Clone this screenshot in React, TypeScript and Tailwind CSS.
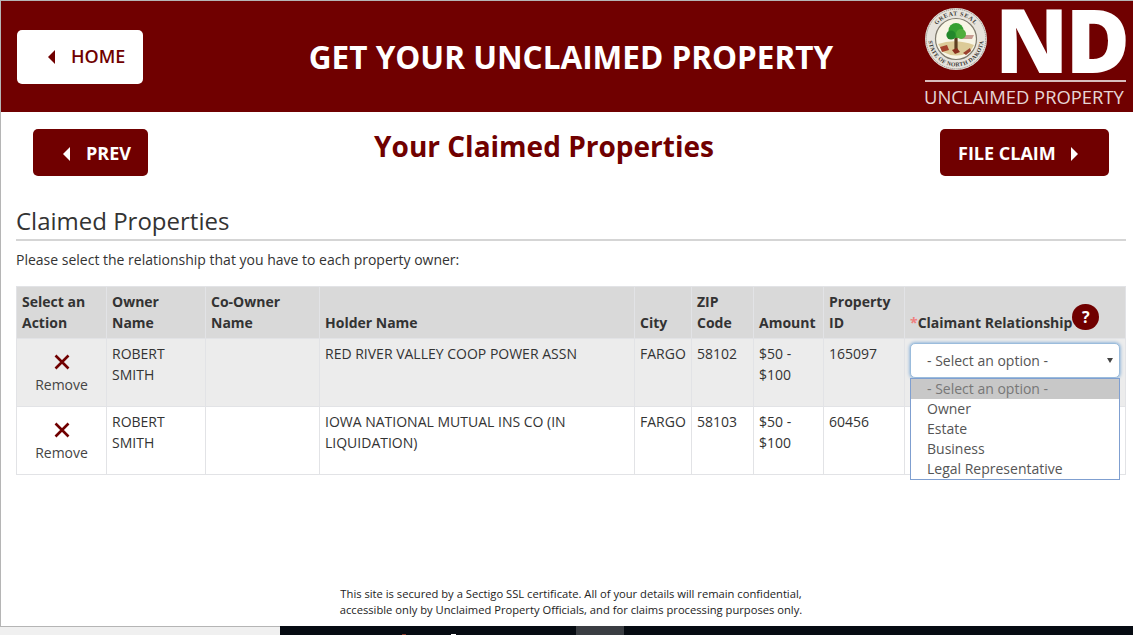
const headers = [
  { label: "Select an Action", w: "w-[90px]" },
  { label: "Owner Name", w: "w-[99px]" },
  { label: "Co-Owner Name", w: "w-[114px]" },
  { label: "Holder Name", w: "w-[315px]" },
  { label: "City", w: "w-[57px]" },
  { label: "ZIP Code", w: "w-[62px]" },
  { label: "Amount", w: "w-[70px]" },
  { label: "Property ID", w: "w-[81px]" },
]

const rows = [
  { holder: "RED RIVER VALLEY COOP POWER ASSN", zip: "58102", id: "165097" },
  { holder: "IOWA NATIONAL MUTUAL INS CO (IN LIQUIDATION)", zip: "58103", id: "60456" },
]

const options = ["Owner", "Estate", "Business", "Legal Representative"]

function CaretLeft({ className }: { className: string }) {
  return (
    <svg width="7" height="14" viewBox="0 0 7 14" className={className}>
      <path d="M7 0 L0 7 L7 14 Z" fill="currentColor" />
    </svg>
  )
}

// state seal, ring lettering stays real text on a path
function Seal() {
  return (
    <svg width="62" height="62" viewBox="0 0 62 62" className="shrink-0">
      <defs>
        <path id="sealTop" d="M7.5 31 A23.5 23.5 0 0 1 54.5 31" />
        <path id="sealBottom" d="M3.5 31 A27.5 27.5 0 0 0 58.5 31" />
      </defs>
      <circle cx="31" cy="31" r="31" fill="#e6e3dc" />
      <circle cx="31" cy="31" r="29.8" fill="none" stroke="#8c8880" strokeWidth="0.9" strokeDasharray="1.2 0.8" />
      <circle cx="31" cy="31" r="20.5" fill="#f8f5e6" stroke="#7f7a6d" strokeWidth="1.2" />
      <text fontFamily="Liberation Serif, serif" fontSize="6" fontWeight="700" fill="#3d3a35" letterSpacing="0.6">
        <textPath href="#sealTop" startOffset="50%" textAnchor="middle">GREAT SEAL</textPath>
      </text>
      <text fontFamily="Liberation Serif, serif" fontSize="5.8" fontWeight="700" fill="#3d3a35" letterSpacing="0.3">
        <textPath href="#sealBottom" startOffset="50%" textAnchor="middle">STATE OF NORTH DAKOTA</textPath>
      </text>
      <path d="M13 36 Q30 30 49 37 L45 44 Q31 51 18 44 Z" fill="#dccb98" />
      <path d="M36 27 H49 L47 31 H36 Z" fill="#c79c92" />
      <path d="M31 29 L31 42" stroke="#5e3f22" strokeWidth="3.2" />
      <circle cx="31" cy="22.5" r="7.5" fill="#35a032" />
      <circle cx="26" cy="27" r="4.6" fill="#23882c" />
      <circle cx="36" cy="26" r="5" fill="#4fae3c" />
      <path d="M15 39 L22 37 L24 42 L17 44 Z" fill="#a5432d" />
      <path d="M27 42 L32 40 L35 44 L30 46 Z" fill="#8a2f1e" />
      <path d="M38 45 L45 40 L46 43 L41 47 Z" fill="#9a412e" />
    </svg>
  )
}

export default function App() {
  return (
    <div className="flex h-[635px] w-[1133px] flex-col overflow-hidden bg-[#f0f0f0] font-['Open_Sans',sans-serif] text-[14px] text-[#333]">
      <div className="flex h-[627px] flex-col border-b border-l border-t border-[#b5b5b5] bg-white">
        <header className="flex h-[111px] items-center bg-[#700000] pl-4 pr-[7px]">
          <button className="flex h-[54px] w-[126px] shrink-0 items-center gap-[16px] rounded-[5px] bg-white pl-[31px] text-[18px] font-semibold text-[#700000]">
            <CaretLeft className="" />
            HOME
          </button>
          <h1 className="flex-1 pl-[74px] text-center text-[31.5px] font-bold text-white">GET YOUR UNCLAIMED PROPERTY</h1>
          <div className="flex w-[201px] shrink-0 flex-col">
            <div className="flex h-[69px] items-center">
              <Seal />
              <span className="ml-[8px] text-[88px] leading-[69px] font-extrabold tracking-[-3px] text-white">ND</span>
            </div>
            <div className="mt-[6px] h-[2px] bg-[#d9bcbc]" />
            <div className="-ml-px mt-[2px] whitespace-nowrap text-[18.4px] leading-[25px] text-[#e6d5d5]">UNCLAIMED PROPERTY</div>
          </div>
        </header>

        <div className="flex items-start justify-between pl-[32px] pr-[24px] pt-[17px]">
          <button className="flex h-[47px] w-[115px] items-center gap-[16px] rounded-[5px] bg-[#700000] pl-[30px] pt-[2px] text-[18px] font-bold text-white">
            <CaretLeft className="" />
            PREV
          </button>
          <h2 className="text-[28px] leading-[34px] font-bold text-[#700000]">Your Claimed Properties</h2>
          <button className="flex h-[47px] w-[169px] items-center gap-[15px] rounded-[5px] bg-[#700000] pl-[18px] pt-[2px] text-[18px] font-bold text-white">
            FILE CLAIM
            <CaretLeft className="rotate-180" />
          </button>
        </div>

        <div className="pl-[15px] pr-[7px] pt-[28px]">
          <h3 className="border-b-2 border-[#d5d5d5] pb-[2px] text-[24px] leading-[33px] text-[#333]">Claimed Properties</h3>
          <p className="mt-[9px] text-[14px] leading-[20px]">Please select the relationship that you have to each property owner:</p>

          <table className="mt-[16px] w-[1110px] table-fixed border-collapse">
            <thead>
              <tr className="h-[52px] bg-[#d9d9d9]">
                {headers.map((h) => (
                  <th key={h.label} className={`${h.w} border border-[#e2e3e6] px-[5px] pb-[5px] align-bottom text-left text-[14px] leading-[21px] font-bold`}>
                    {h.label}
                  </th>
                ))}
                <th className="border border-[#e2e3e6] px-[5px] pb-[5px] align-bottom text-left text-[14px] leading-[21px] font-bold">
                  <span className="relative whitespace-nowrap">
                    <span className="text-[#f08080]">*</span>Claimant Relationship
                    <span className="absolute bottom-[2px] left-full flex h-[26px] w-[27px] items-center justify-center rounded-full bg-[#700000] text-[16px] font-bold text-white">?</span>
                  </span>
                </th>
              </tr>
            </thead>
            <tbody>
              {rows.map((row, i) => (
                <tr key={row.zip} className={`h-[68px] align-top ${i === 0 ? "bg-[#ececec]" : "bg-white"}`}>
                  <td className="border border-[#e2e3e6] pt-[5px] text-center leading-[21px]">
                    <svg width="16" height="16" viewBox="0 0 16 16" className="mx-auto mt-[10px] mb-[4px]">
                      <path d="M1.5 1.5 L14.5 14.5 M14.5 1.5 L1.5 14.5" stroke="#700000" strokeWidth="2.6" />
                    </svg>
                    <div className="text-[#444]">Remove</div>
                  </td>
                  <td className="border border-[#e2e3e6] px-[5px] pt-[4px] leading-[21px]">ROBERT SMITH</td>
                  <td className="border border-[#e2e3e6]" />
                  <td className="border border-[#e2e3e6] px-[5px] pt-[4px] leading-[21px]">{row.holder}</td>
                  <td className="border border-[#e2e3e6] px-[5px] pt-[4px] leading-[21px]">FARGO</td>
                  <td className="border border-[#e2e3e6] px-[5px] pt-[4px] leading-[21px]">{row.zip}</td>
                  <td className="border border-[#e2e3e6] px-[5px] pt-[4px] leading-[21px]">$50 - $100</td>
                  <td className="border border-[#e2e3e6] px-[5px] pt-[4px] leading-[21px]">{row.id}</td>
                  <td className="border border-[#e2e3e6] px-[5px] pt-[4px]">
                    {i === 0 && (
                      <div className="relative">
                        <div className="flex h-[35px] w-[210px] items-center justify-between rounded-[5px] border border-[#9bbcdc] bg-white pl-[16px] pr-[6px] text-[#555] shadow-[0_0_3px_1px_#9bbcdc]">
                          - Select an option -
                          <svg width="6" height="5" viewBox="0 0 6 5"><path d="M0 0 H6 L3 5 Z" fill="#444" /></svg>
                        </div>
                        <div className="absolute left-0 top-[35px] z-10 w-[210px] border border-[#7f9fd0] bg-white text-[#555]">
                          <div className="h-[20px] bg-[#c8c8c8] pl-[16px] leading-[20px] text-[#777]">- Select an option -</div>
                          {options.map((o) => (
                            <div key={o} className="h-[20px] pl-[16px] leading-[20px]">{o}</div>
                          ))}
                        </div>
                      </div>
                    )}
                  </td>
                </tr>
              ))}
            </tbody>
          </table>
        </div>

        <p className="mt-auto pb-[8px] pl-[8px] text-center text-[11.2px] leading-[16px] text-[#222]">
          This site is secured by a Sectigo SSL certificate. All of your details will remain confidential,
          <br />
          accessible only by Unclaimed Property Officials, and for claims processing purposes only.
        </p>
      </div>

      <div className="flex flex-1">
        <div className="w-[280px]" />
        <div className="z-10 -mt-px flex flex-1 items-end bg-[#060b12]">
          <div className="ml-[122px] h-px w-[4px] bg-[#8a3a2a]" />
          <div className="ml-[45px] h-px w-[5px] bg-white" />
          <div className="ml-[120px] h-full w-[48px] bg-[#3a3d42]" />
        </div>
      </div>
    </div>
  )
}
